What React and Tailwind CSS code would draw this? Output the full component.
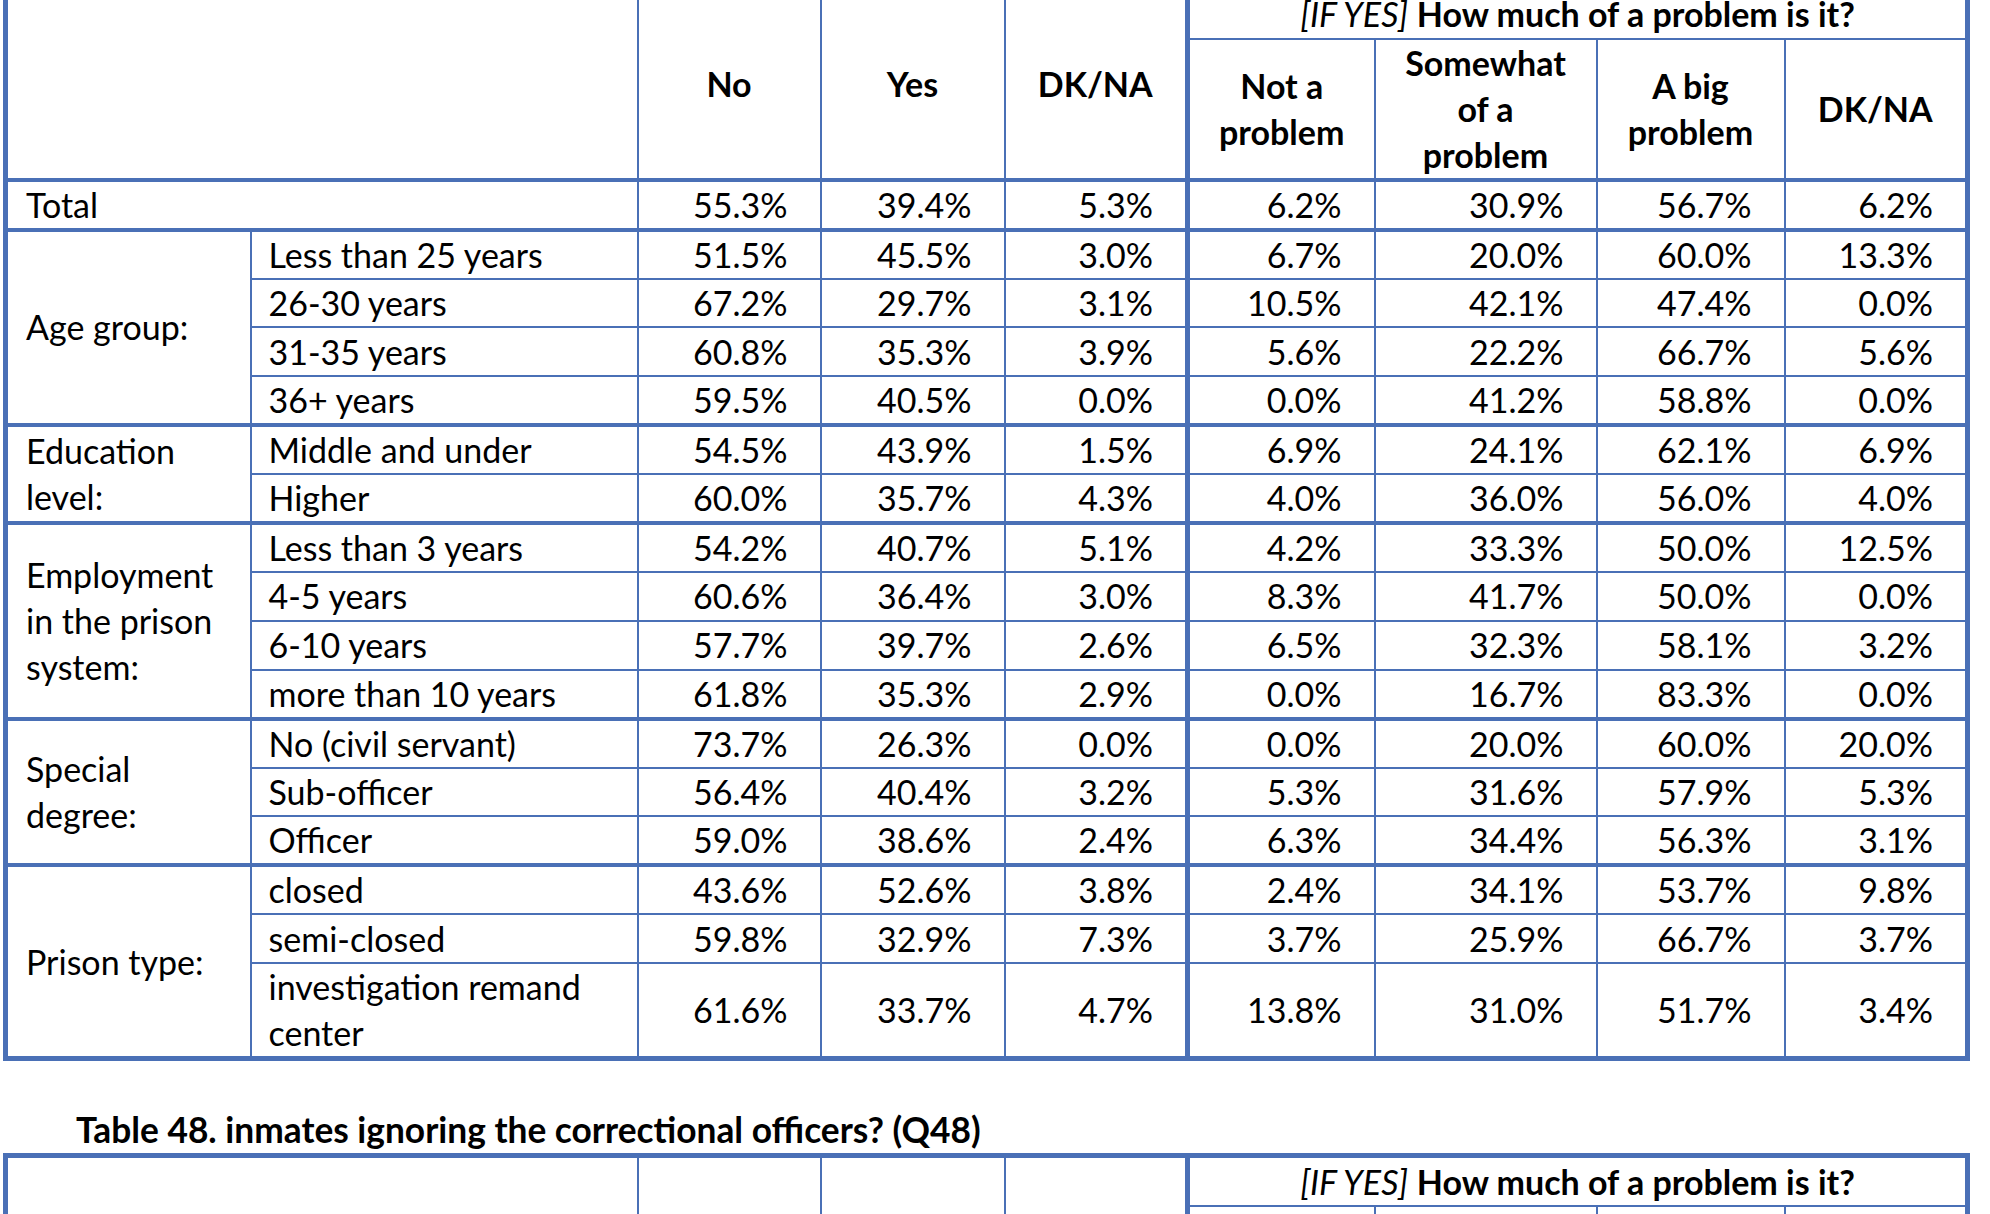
import React from "react";

const groups = [
  {
    label: ["Age group:"],
    rows: [
      ["Less than 25 years", "51.5%", "45.5%", "3.0%", "6.7%", "20.0%", "60.0%", "13.3%"],
      ["26-30 years", "67.2%", "29.7%", "3.1%", "10.5%", "42.1%", "47.4%", "0.0%"],
      ["31-35 years", "60.8%", "35.3%", "3.9%", "5.6%", "22.2%", "66.7%", "5.6%"],
      ["36+ years", "59.5%", "40.5%", "0.0%", "0.0%", "41.2%", "58.8%", "0.0%"],
    ],
  },
  {
    label: ["Education", "level:"],
    rows: [
      ["Middle and under", "54.5%", "43.9%", "1.5%", "6.9%", "24.1%", "62.1%", "6.9%"],
      ["Higher", "60.0%", "35.7%", "4.3%", "4.0%", "36.0%", "56.0%", "4.0%"],
    ],
  },
  {
    label: ["Employment", "in the prison", "system:"],
    rows: [
      ["Less than 3 years", "54.2%", "40.7%", "5.1%", "4.2%", "33.3%", "50.0%", "12.5%"],
      ["4-5 years", "60.6%", "36.4%", "3.0%", "8.3%", "41.7%", "50.0%", "0.0%"],
      ["6-10 years", "57.7%", "39.7%", "2.6%", "6.5%", "32.3%", "58.1%", "3.2%"],
      ["more than 10 years", "61.8%", "35.3%", "2.9%", "0.0%", "16.7%", "83.3%", "0.0%"],
    ],
  },
  {
    label: ["Special", "degree:"],
    rows: [
      ["No (civil servant)", "73.7%", "26.3%", "0.0%", "0.0%", "20.0%", "60.0%", "20.0%"],
      ["Sub-officer", "56.4%", "40.4%", "3.2%", "5.3%", "31.6%", "57.9%", "5.3%"],
      ["Officer", "59.0%", "38.6%", "2.4%", "6.3%", "34.4%", "56.3%", "3.1%"],
    ],
  },
  {
    label: ["Prison type:"],
    rows: [
      ["closed", "43.6%", "52.6%", "3.8%", "2.4%", "34.1%", "53.7%", "9.8%"],
      ["semi-closed", "59.8%", "32.9%", "7.3%", "3.7%", "25.9%", "66.7%", "3.7%"],
      ["investigation remand|center", "61.6%", "33.7%", "4.7%", "13.8%", "31.0%", "51.7%", "3.4%"],
    ],
  },
];

const total = ["55.3%", "39.4%", "5.3%", "6.2%", "30.9%", "56.7%", "6.2%"];

const Cols = () => (
  <colgroup>
    <col className="w-[245px]" />
    <col className="w-[387px]" />
    <col className="w-[183px]" />
    <col className="w-[184px]" />
    <col className="w-[183px]" />
    <col className="w-[187px]" />
    <col className="w-[222px]" />
    <col className="w-[188px]" />
    <col className="w-[183px]" />
  </colgroup>
);

const Nums = ({ values }) =>
  values.map((v, i) => (
    <td
      key={i}
      className={
        i === 2
          ? "border-2 border-r-[5px] border-[#4a70b6] text-right pr-[32px]"
          : "border-2 border-[#4a70b6] text-right pr-[32px]"
      }
    >
      {v}
    </td>
  ));

const Header = () => (
  <thead className="border-b-4 border-[#4a70b6]">
    <tr className="h-[50px]">
      <th colSpan={2} rowSpan={2} className="border-2 border-[#4a70b6]"></th>
      <th rowSpan={2} className="border-2 border-[#4a70b6] font-bold">No</th>
      <th rowSpan={2} className="border-2 border-[#4a70b6] font-bold">Yes</th>
      <th rowSpan={2} className="border-2 border-r-[5px] border-[#4a70b6] font-bold">DK/NA</th>
      <th colSpan={4} className="border-2 border-[#4a70b6] font-normal">
        <span className="italic">[IF YES]</span> <span className="font-bold">How much of a problem is it?</span>
      </th>
    </tr>
    <tr className="h-[141px]">
      <th className="border-2 border-[#4a70b6] font-bold">Not a<br />problem</th>
      <th className="border-2 border-[#4a70b6] font-bold">Somewhat<br />of a<br />problem</th>
      <th className="border-2 border-[#4a70b6] font-bold">A big<br />problem</th>
      <th className="border-2 border-[#4a70b6] font-bold">DK/NA</th>
    </tr>
  </thead>
);

export default function App() {
  return (
    <div className="h-screen overflow-hidden bg-white text-black font-[Lato,sans-serif] text-[34px] leading-[46px]">
      <table className="table-fixed w-[1966px] ml-[3px] -mt-[14px] border-[5px] border-[#4a70b6]">
        <Cols />
        <Header />
        <tbody className="border-b-4 border-[#4a70b6]">
          <tr className="h-[49px]">
            <td colSpan={2} className="border-2 border-[#4a70b6] pl-[18px]">Total</td>
            <Nums values={total} />
          </tr>
        </tbody>
        {groups.map((g, gi) => (
          <tbody key={gi} className="border-b-4 border-[#4a70b6]">
            {g.rows.map((r, ri) => (
              <tr key={ri} className={r[0].includes("|") ? "h-[94px]" : "h-[48.8px]"}>
                {ri === 0 && (
                  <td rowSpan={g.rows.length} className="border-2 border-[#4a70b6] pl-[18px]">
                    {g.label.map((l, li) => (
                      <div key={li}>{l}</div>
                    ))}
                  </td>
                )}
                <td className="border-2 border-[#4a70b6] pl-[17px]">
                  {r[0].split("|").map((l, li) => (
                    <div key={li}>{l}</div>
                  ))}
                </td>
                <Nums values={r.slice(1)} />
              </tr>
            ))}
          </tbody>
        ))}
      </table>

      <div className="mt-[46px] pl-[76px] font-bold text-[35.3px]">
        Table 48. inmates ignoring the correctional officers? (Q48)
      </div>

      <table className="table-fixed w-[1966px] ml-[3px] border-[5px] border-[#4a70b6]">
        <Cols />
        <Header />
        <tbody>
          <tr className="h-[49px]">
            <td colSpan={2} className="border-2 border-[#4a70b6] pl-[18px]">Total</td>
            <Nums values={["", "", "", "", "", "", ""]} />
          </tr>
        </tbody>
      </table>
    </div>
  );
}
